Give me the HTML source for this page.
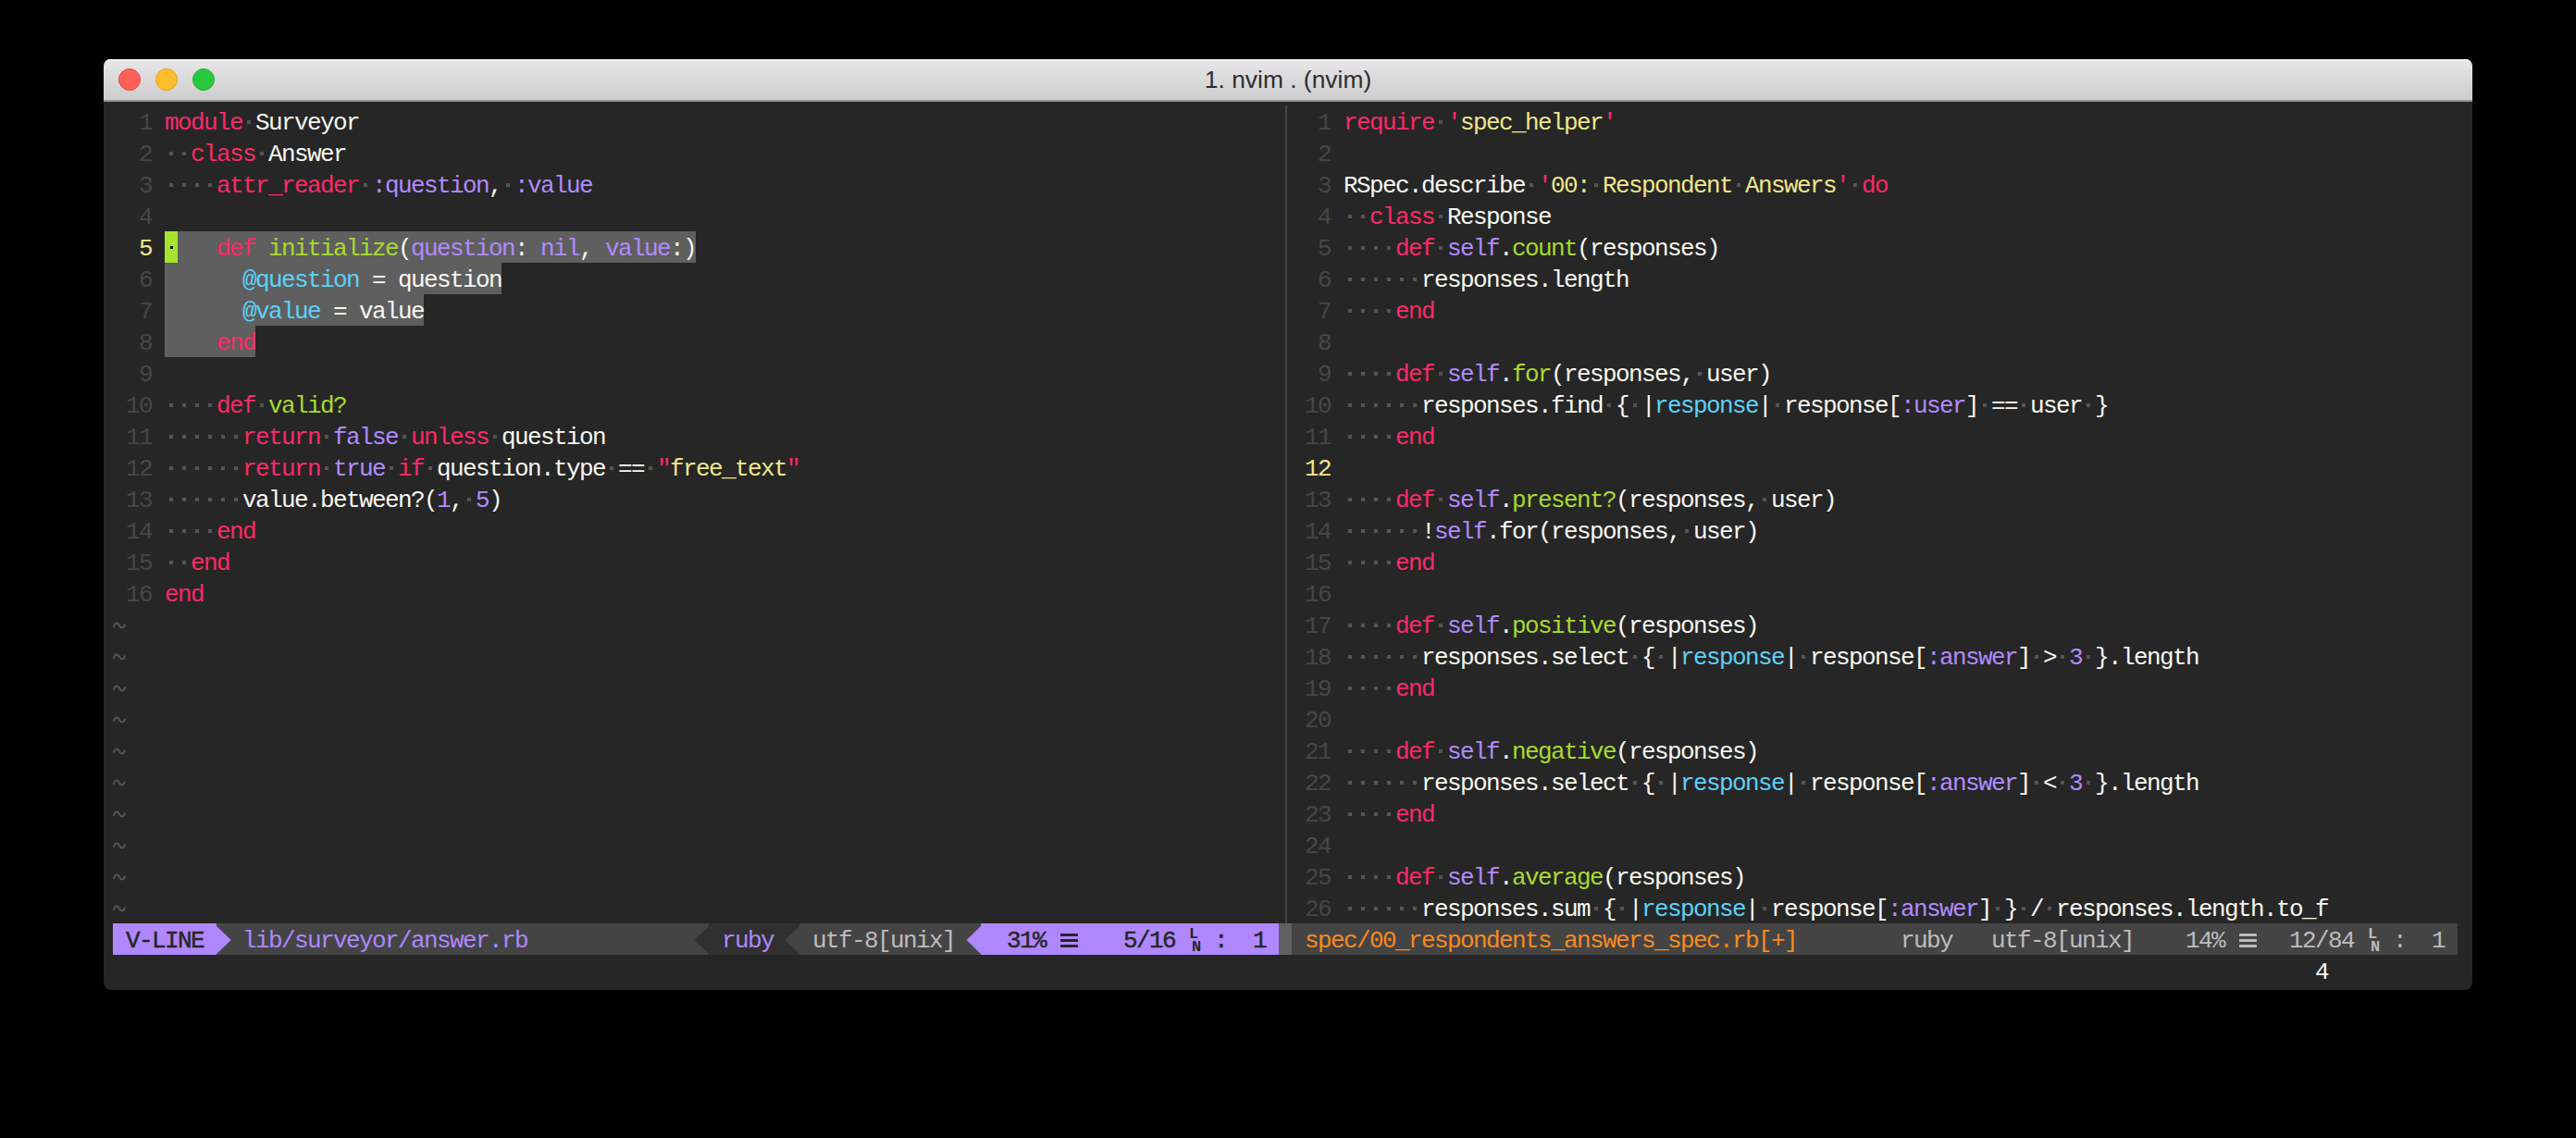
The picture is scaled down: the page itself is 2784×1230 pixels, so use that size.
<!DOCTYPE html>
<html><head><meta charset="utf-8"><style>
html,body{margin:0;padding:0;}
body{width:2784px;height:1230px;background:#000;position:relative;overflow:hidden;}
#win{position:absolute;left:112px;top:64px;width:2560px;height:1006px;background:#262626;border-radius:7px 7px 8px 8px;overflow:hidden;}
#tb{position:absolute;left:0;top:0;width:2560px;height:44px;background:linear-gradient(#e8e6e8,#cecdce);border-bottom:2px solid #959595;box-shadow:inset 0 1.5px 0 #f7f7f7;}
.tl{position:absolute;top:10px;width:22px;height:22px;border-radius:50%;border:1px solid;}
#title{position:absolute;left:0;width:2560px;top:0;height:44px;line-height:44px;text-align:center;font-family:"Liberation Sans",sans-serif;font-size:26.4px;color:#2e2e2e;}
.t{position:absolute;font-family:"Liberation Mono",monospace;font-size:26px;letter-spacing:-1.6023px;line-height:34px;white-space:pre;}
.g{position:absolute;font-family:"Liberation Mono",monospace;font-size:17px;line-height:17px;white-space:pre;}
</style></head><body>
<div id="win">
<div id="tb">
<div class="tl" style="left:16px;background:#FF6159;border-color:#E2463F"></div>
<div class="tl" style="left:56px;background:#FFBD2E;border-color:#E1A116"></div>
<div class="tl" style="left:96px;background:#28C940;border-color:#1DAD2B"></div>
<div id="title">1. nvim . (nvim)</div>
</div>
</div>
<div style="position:absolute;left:178px;top:250px;width:574px;height:34px;background:#5f5f5f;"></div>
<div style="position:absolute;left:178px;top:284px;width:364px;height:34px;background:#5f5f5f;"></div>
<div style="position:absolute;left:178px;top:318px;width:280px;height:34px;background:#5f5f5f;"></div>
<div style="position:absolute;left:178px;top:352px;width:98px;height:34px;background:#5f5f5f;"></div>
<div style="position:absolute;left:178px;top:250px;width:14px;height:34px;background:#A6E22E;"></div>
<div style="position:absolute;left:184px;top:266px;width:3px;height:3px;background:#000000;"></div>
<span class="t" style="left:150px;top:116.0px;color:#464646;">1</span>
<span class="t" style="left:150px;top:150.0px;color:#464646;">2</span>
<span class="t" style="left:150px;top:184.0px;color:#464646;">3</span>
<span class="t" style="left:150px;top:218.0px;color:#464646;">4</span>
<span class="t" style="left:150px;top:252.0px;color:#F0E68C;">5</span>
<span class="t" style="left:150px;top:286.0px;color:#464646;">6</span>
<span class="t" style="left:150px;top:320.0px;color:#464646;">7</span>
<span class="t" style="left:150px;top:354.0px;color:#464646;">8</span>
<span class="t" style="left:150px;top:388.0px;color:#464646;">9</span>
<span class="t" style="left:136px;top:422.0px;color:#464646;">10</span>
<span class="t" style="left:136px;top:456.0px;color:#464646;">11</span>
<span class="t" style="left:136px;top:490.0px;color:#464646;">12</span>
<span class="t" style="left:136px;top:524.0px;color:#464646;">13</span>
<span class="t" style="left:136px;top:558.0px;color:#464646;">14</span>
<span class="t" style="left:136px;top:592.0px;color:#464646;">15</span>
<span class="t" style="left:136px;top:626.0px;color:#464646;">16</span>
<span class="t" style="left:178px;top:116.0px;color:#FC2A68;">module</span>
<div style="position:absolute;left:267px;top:130px;width:4px;height:4px;background:#545454;"></div>
<span class="t" style="left:276px;top:116.0px;color:#F8F8F2;">Surveyor</span>
<div style="position:absolute;left:183px;top:164px;width:4px;height:4px;background:#545454;"></div>
<div style="position:absolute;left:197px;top:164px;width:4px;height:4px;background:#545454;"></div>
<span class="t" style="left:206px;top:150.0px;color:#FC2A68;">class</span>
<div style="position:absolute;left:281px;top:164px;width:4px;height:4px;background:#545454;"></div>
<span class="t" style="left:290px;top:150.0px;color:#F8F8F2;">Answer</span>
<div style="position:absolute;left:183px;top:198px;width:4px;height:4px;background:#545454;"></div>
<div style="position:absolute;left:197px;top:198px;width:4px;height:4px;background:#545454;"></div>
<div style="position:absolute;left:211px;top:198px;width:4px;height:4px;background:#545454;"></div>
<div style="position:absolute;left:225px;top:198px;width:4px;height:4px;background:#545454;"></div>
<span class="t" style="left:234px;top:184.0px;color:#FC2A68;">attr_reader</span>
<div style="position:absolute;left:393px;top:198px;width:4px;height:4px;background:#545454;"></div>
<span class="t" style="left:402px;top:184.0px;color:#B28AFF;">:question</span>
<span class="t" style="left:528px;top:184.0px;color:#F8F8F2;">,</span>
<div style="position:absolute;left:547px;top:198px;width:4px;height:4px;background:#545454;"></div>
<span class="t" style="left:556px;top:184.0px;color:#B28AFF;">:value</span>
<div style="position:absolute;left:183px;top:436px;width:4px;height:4px;background:#545454;"></div>
<div style="position:absolute;left:197px;top:436px;width:4px;height:4px;background:#545454;"></div>
<div style="position:absolute;left:211px;top:436px;width:4px;height:4px;background:#545454;"></div>
<div style="position:absolute;left:225px;top:436px;width:4px;height:4px;background:#545454;"></div>
<span class="t" style="left:234px;top:422.0px;color:#FC2A68;">def</span>
<div style="position:absolute;left:281px;top:436px;width:4px;height:4px;background:#545454;"></div>
<span class="t" style="left:290px;top:422.0px;color:#A8DC2C;">valid?</span>
<div style="position:absolute;left:183px;top:470px;width:4px;height:4px;background:#545454;"></div>
<div style="position:absolute;left:197px;top:470px;width:4px;height:4px;background:#545454;"></div>
<div style="position:absolute;left:211px;top:470px;width:4px;height:4px;background:#545454;"></div>
<div style="position:absolute;left:225px;top:470px;width:4px;height:4px;background:#545454;"></div>
<div style="position:absolute;left:239px;top:470px;width:4px;height:4px;background:#545454;"></div>
<div style="position:absolute;left:253px;top:470px;width:4px;height:4px;background:#545454;"></div>
<span class="t" style="left:262px;top:456.0px;color:#FC2A68;">return</span>
<div style="position:absolute;left:351px;top:470px;width:4px;height:4px;background:#545454;"></div>
<span class="t" style="left:360px;top:456.0px;color:#B28AFF;">false</span>
<div style="position:absolute;left:435px;top:470px;width:4px;height:4px;background:#545454;"></div>
<span class="t" style="left:444px;top:456.0px;color:#FC2A68;">unless</span>
<div style="position:absolute;left:533px;top:470px;width:4px;height:4px;background:#545454;"></div>
<span class="t" style="left:542px;top:456.0px;color:#F8F8F2;">question</span>
<div style="position:absolute;left:183px;top:504px;width:4px;height:4px;background:#545454;"></div>
<div style="position:absolute;left:197px;top:504px;width:4px;height:4px;background:#545454;"></div>
<div style="position:absolute;left:211px;top:504px;width:4px;height:4px;background:#545454;"></div>
<div style="position:absolute;left:225px;top:504px;width:4px;height:4px;background:#545454;"></div>
<div style="position:absolute;left:239px;top:504px;width:4px;height:4px;background:#545454;"></div>
<div style="position:absolute;left:253px;top:504px;width:4px;height:4px;background:#545454;"></div>
<span class="t" style="left:262px;top:490.0px;color:#FC2A68;">return</span>
<div style="position:absolute;left:351px;top:504px;width:4px;height:4px;background:#545454;"></div>
<span class="t" style="left:360px;top:490.0px;color:#B28AFF;">true</span>
<div style="position:absolute;left:421px;top:504px;width:4px;height:4px;background:#545454;"></div>
<span class="t" style="left:430px;top:490.0px;color:#FC2A68;">if</span>
<div style="position:absolute;left:463px;top:504px;width:4px;height:4px;background:#545454;"></div>
<span class="t" style="left:472px;top:490.0px;color:#F8F8F2;">question.type</span>
<div style="position:absolute;left:659px;top:504px;width:4px;height:4px;background:#545454;"></div>
<span class="t" style="left:668px;top:490.0px;color:#F8F8F2;">==</span>
<div style="position:absolute;left:701px;top:504px;width:4px;height:4px;background:#545454;"></div>
<span class="t" style="left:710px;top:490.0px;color:#FC2A68;">&quot;</span>
<span class="t" style="left:724px;top:490.0px;color:#F0E68A;">free_text</span>
<span class="t" style="left:850px;top:490.0px;color:#FC2A68;">&quot;</span>
<div style="position:absolute;left:183px;top:538px;width:4px;height:4px;background:#545454;"></div>
<div style="position:absolute;left:197px;top:538px;width:4px;height:4px;background:#545454;"></div>
<div style="position:absolute;left:211px;top:538px;width:4px;height:4px;background:#545454;"></div>
<div style="position:absolute;left:225px;top:538px;width:4px;height:4px;background:#545454;"></div>
<div style="position:absolute;left:239px;top:538px;width:4px;height:4px;background:#545454;"></div>
<div style="position:absolute;left:253px;top:538px;width:4px;height:4px;background:#545454;"></div>
<span class="t" style="left:262px;top:524.0px;color:#F8F8F2;">value.between?(</span>
<span class="t" style="left:472px;top:524.0px;color:#B28AFF;">1</span>
<span class="t" style="left:486px;top:524.0px;color:#F8F8F2;">,</span>
<div style="position:absolute;left:505px;top:538px;width:4px;height:4px;background:#545454;"></div>
<span class="t" style="left:514px;top:524.0px;color:#B28AFF;">5</span>
<span class="t" style="left:528px;top:524.0px;color:#F8F8F2;">)</span>
<div style="position:absolute;left:183px;top:572px;width:4px;height:4px;background:#545454;"></div>
<div style="position:absolute;left:197px;top:572px;width:4px;height:4px;background:#545454;"></div>
<div style="position:absolute;left:211px;top:572px;width:4px;height:4px;background:#545454;"></div>
<div style="position:absolute;left:225px;top:572px;width:4px;height:4px;background:#545454;"></div>
<span class="t" style="left:234px;top:558.0px;color:#FC2A68;">end</span>
<div style="position:absolute;left:183px;top:606px;width:4px;height:4px;background:#545454;"></div>
<div style="position:absolute;left:197px;top:606px;width:4px;height:4px;background:#545454;"></div>
<span class="t" style="left:206px;top:592.0px;color:#FC2A68;">end</span>
<span class="t" style="left:178px;top:626.0px;color:#FC2A68;">end</span>
<span class="t" style="left:234px;top:252.0px;color:#FC2A68;">def</span>
<span class="t" style="left:290px;top:252.0px;color:#A8DC2C;">initialize</span>
<span class="t" style="left:430px;top:252.0px;color:#F8F8F2;">(</span>
<span class="t" style="left:444px;top:252.0px;color:#B28AFF;">question</span>
<span class="t" style="left:556px;top:252.0px;color:#F8F8F2;">:</span>
<span class="t" style="left:584px;top:252.0px;color:#B28AFF;">nil</span>
<span class="t" style="left:626px;top:252.0px;color:#F8F8F2;">,</span>
<span class="t" style="left:654px;top:252.0px;color:#B28AFF;">value</span>
<span class="t" style="left:724px;top:252.0px;color:#F8F8F2;">:)</span>
<span class="t" style="left:262px;top:286.0px;color:#5CD2F8;">@question</span>
<span class="t" style="left:402px;top:286.0px;color:#F8F8F2;">=</span>
<span class="t" style="left:430px;top:286.0px;color:#F8F8F2;">question</span>
<span class="t" style="left:262px;top:320.0px;color:#5CD2F8;">@value</span>
<span class="t" style="left:360px;top:320.0px;color:#F8F8F2;">=</span>
<span class="t" style="left:388px;top:320.0px;color:#F8F8F2;">value</span>
<span class="t" style="left:234px;top:354.0px;color:#FC2A68;">end</span>
<svg style="position:absolute;left:122px;top:658px" width="14" height="34"><path d="M0.8,20 C1.8,16.5 2.8,15.6 4.2,15.6 C5.6,15.6 6.5,17 7,18 C7.5,19 8.4,20.6 9.8,20.6 C11.2,20.6 12.2,19.6 13.2,16.6" fill="none" stroke="#555555" stroke-width="2"/></svg>
<svg style="position:absolute;left:122px;top:692px" width="14" height="34"><path d="M0.8,20 C1.8,16.5 2.8,15.6 4.2,15.6 C5.6,15.6 6.5,17 7,18 C7.5,19 8.4,20.6 9.8,20.6 C11.2,20.6 12.2,19.6 13.2,16.6" fill="none" stroke="#555555" stroke-width="2"/></svg>
<svg style="position:absolute;left:122px;top:726px" width="14" height="34"><path d="M0.8,20 C1.8,16.5 2.8,15.6 4.2,15.6 C5.6,15.6 6.5,17 7,18 C7.5,19 8.4,20.6 9.8,20.6 C11.2,20.6 12.2,19.6 13.2,16.6" fill="none" stroke="#555555" stroke-width="2"/></svg>
<svg style="position:absolute;left:122px;top:760px" width="14" height="34"><path d="M0.8,20 C1.8,16.5 2.8,15.6 4.2,15.6 C5.6,15.6 6.5,17 7,18 C7.5,19 8.4,20.6 9.8,20.6 C11.2,20.6 12.2,19.6 13.2,16.6" fill="none" stroke="#555555" stroke-width="2"/></svg>
<svg style="position:absolute;left:122px;top:794px" width="14" height="34"><path d="M0.8,20 C1.8,16.5 2.8,15.6 4.2,15.6 C5.6,15.6 6.5,17 7,18 C7.5,19 8.4,20.6 9.8,20.6 C11.2,20.6 12.2,19.6 13.2,16.6" fill="none" stroke="#555555" stroke-width="2"/></svg>
<svg style="position:absolute;left:122px;top:828px" width="14" height="34"><path d="M0.8,20 C1.8,16.5 2.8,15.6 4.2,15.6 C5.6,15.6 6.5,17 7,18 C7.5,19 8.4,20.6 9.8,20.6 C11.2,20.6 12.2,19.6 13.2,16.6" fill="none" stroke="#555555" stroke-width="2"/></svg>
<svg style="position:absolute;left:122px;top:862px" width="14" height="34"><path d="M0.8,20 C1.8,16.5 2.8,15.6 4.2,15.6 C5.6,15.6 6.5,17 7,18 C7.5,19 8.4,20.6 9.8,20.6 C11.2,20.6 12.2,19.6 13.2,16.6" fill="none" stroke="#555555" stroke-width="2"/></svg>
<svg style="position:absolute;left:122px;top:896px" width="14" height="34"><path d="M0.8,20 C1.8,16.5 2.8,15.6 4.2,15.6 C5.6,15.6 6.5,17 7,18 C7.5,19 8.4,20.6 9.8,20.6 C11.2,20.6 12.2,19.6 13.2,16.6" fill="none" stroke="#555555" stroke-width="2"/></svg>
<svg style="position:absolute;left:122px;top:930px" width="14" height="34"><path d="M0.8,20 C1.8,16.5 2.8,15.6 4.2,15.6 C5.6,15.6 6.5,17 7,18 C7.5,19 8.4,20.6 9.8,20.6 C11.2,20.6 12.2,19.6 13.2,16.6" fill="none" stroke="#555555" stroke-width="2"/></svg>
<svg style="position:absolute;left:122px;top:964px" width="14" height="34"><path d="M0.8,20 C1.8,16.5 2.8,15.6 4.2,15.6 C5.6,15.6 6.5,17 7,18 C7.5,19 8.4,20.6 9.8,20.6 C11.2,20.6 12.2,19.6 13.2,16.6" fill="none" stroke="#555555" stroke-width="2"/></svg>
<div style="position:absolute;left:1389px;top:114px;width:2px;height:884px;background:#444444;"></div>
<span class="t" style="left:1424px;top:116.0px;color:#464646;">1</span>
<span class="t" style="left:1452px;top:116.0px;color:#FC2A68;">require</span>
<div style="position:absolute;left:1555px;top:130px;width:4px;height:4px;background:#545454;"></div>
<span class="t" style="left:1564px;top:116.0px;color:#FC2A68;">&#x27;</span>
<span class="t" style="left:1578px;top:116.0px;color:#F0E68A;">spec_helper</span>
<span class="t" style="left:1732px;top:116.0px;color:#FC2A68;">&#x27;</span>
<span class="t" style="left:1424px;top:150.0px;color:#464646;">2</span>
<span class="t" style="left:1424px;top:184.0px;color:#464646;">3</span>
<span class="t" style="left:1452px;top:184.0px;color:#F8F8F2;">RSpec.describe</span>
<div style="position:absolute;left:1653px;top:198px;width:4px;height:4px;background:#545454;"></div>
<span class="t" style="left:1662px;top:184.0px;color:#FC2A68;">&#x27;</span>
<span class="t" style="left:1676px;top:184.0px;color:#F0E68A;">00:</span>
<div style="position:absolute;left:1723px;top:198px;width:4px;height:4px;background:#545454;"></div>
<span class="t" style="left:1732px;top:184.0px;color:#F0E68A;">Respondent</span>
<div style="position:absolute;left:1877px;top:198px;width:4px;height:4px;background:#545454;"></div>
<span class="t" style="left:1886px;top:184.0px;color:#F0E68A;">Answers</span>
<span class="t" style="left:1984px;top:184.0px;color:#FC2A68;">&#x27;</span>
<div style="position:absolute;left:2003px;top:198px;width:4px;height:4px;background:#545454;"></div>
<span class="t" style="left:2012px;top:184.0px;color:#FC2A68;">do</span>
<span class="t" style="left:1424px;top:218.0px;color:#464646;">4</span>
<div style="position:absolute;left:1457px;top:232px;width:4px;height:4px;background:#545454;"></div>
<div style="position:absolute;left:1471px;top:232px;width:4px;height:4px;background:#545454;"></div>
<span class="t" style="left:1480px;top:218.0px;color:#FC2A68;">class</span>
<div style="position:absolute;left:1555px;top:232px;width:4px;height:4px;background:#545454;"></div>
<span class="t" style="left:1564px;top:218.0px;color:#F8F8F2;">Response</span>
<span class="t" style="left:1424px;top:252.0px;color:#464646;">5</span>
<div style="position:absolute;left:1457px;top:266px;width:4px;height:4px;background:#545454;"></div>
<div style="position:absolute;left:1471px;top:266px;width:4px;height:4px;background:#545454;"></div>
<div style="position:absolute;left:1485px;top:266px;width:4px;height:4px;background:#545454;"></div>
<div style="position:absolute;left:1499px;top:266px;width:4px;height:4px;background:#545454;"></div>
<span class="t" style="left:1508px;top:252.0px;color:#FC2A68;">def</span>
<div style="position:absolute;left:1555px;top:266px;width:4px;height:4px;background:#545454;"></div>
<span class="t" style="left:1564px;top:252.0px;color:#B28AFF;">self</span>
<span class="t" style="left:1620px;top:252.0px;color:#F8F8F2;">.</span>
<span class="t" style="left:1634px;top:252.0px;color:#A8DC2C;">count</span>
<span class="t" style="left:1704px;top:252.0px;color:#F8F8F2;">(responses)</span>
<span class="t" style="left:1424px;top:286.0px;color:#464646;">6</span>
<div style="position:absolute;left:1457px;top:300px;width:4px;height:4px;background:#545454;"></div>
<div style="position:absolute;left:1471px;top:300px;width:4px;height:4px;background:#545454;"></div>
<div style="position:absolute;left:1485px;top:300px;width:4px;height:4px;background:#545454;"></div>
<div style="position:absolute;left:1499px;top:300px;width:4px;height:4px;background:#545454;"></div>
<div style="position:absolute;left:1513px;top:300px;width:4px;height:4px;background:#545454;"></div>
<div style="position:absolute;left:1527px;top:300px;width:4px;height:4px;background:#545454;"></div>
<span class="t" style="left:1536px;top:286.0px;color:#F8F8F2;">responses.length</span>
<span class="t" style="left:1424px;top:320.0px;color:#464646;">7</span>
<div style="position:absolute;left:1457px;top:334px;width:4px;height:4px;background:#545454;"></div>
<div style="position:absolute;left:1471px;top:334px;width:4px;height:4px;background:#545454;"></div>
<div style="position:absolute;left:1485px;top:334px;width:4px;height:4px;background:#545454;"></div>
<div style="position:absolute;left:1499px;top:334px;width:4px;height:4px;background:#545454;"></div>
<span class="t" style="left:1508px;top:320.0px;color:#FC2A68;">end</span>
<span class="t" style="left:1424px;top:354.0px;color:#464646;">8</span>
<span class="t" style="left:1424px;top:388.0px;color:#464646;">9</span>
<div style="position:absolute;left:1457px;top:402px;width:4px;height:4px;background:#545454;"></div>
<div style="position:absolute;left:1471px;top:402px;width:4px;height:4px;background:#545454;"></div>
<div style="position:absolute;left:1485px;top:402px;width:4px;height:4px;background:#545454;"></div>
<div style="position:absolute;left:1499px;top:402px;width:4px;height:4px;background:#545454;"></div>
<span class="t" style="left:1508px;top:388.0px;color:#FC2A68;">def</span>
<div style="position:absolute;left:1555px;top:402px;width:4px;height:4px;background:#545454;"></div>
<span class="t" style="left:1564px;top:388.0px;color:#B28AFF;">self</span>
<span class="t" style="left:1620px;top:388.0px;color:#F8F8F2;">.</span>
<span class="t" style="left:1634px;top:388.0px;color:#A8DC2C;">for</span>
<span class="t" style="left:1676px;top:388.0px;color:#F8F8F2;">(responses,</span>
<div style="position:absolute;left:1835px;top:402px;width:4px;height:4px;background:#545454;"></div>
<span class="t" style="left:1844px;top:388.0px;color:#F8F8F2;">user)</span>
<span class="t" style="left:1410px;top:422.0px;color:#464646;">10</span>
<div style="position:absolute;left:1457px;top:436px;width:4px;height:4px;background:#545454;"></div>
<div style="position:absolute;left:1471px;top:436px;width:4px;height:4px;background:#545454;"></div>
<div style="position:absolute;left:1485px;top:436px;width:4px;height:4px;background:#545454;"></div>
<div style="position:absolute;left:1499px;top:436px;width:4px;height:4px;background:#545454;"></div>
<div style="position:absolute;left:1513px;top:436px;width:4px;height:4px;background:#545454;"></div>
<div style="position:absolute;left:1527px;top:436px;width:4px;height:4px;background:#545454;"></div>
<span class="t" style="left:1536px;top:422.0px;color:#F8F8F2;">responses.find</span>
<div style="position:absolute;left:1737px;top:436px;width:4px;height:4px;background:#545454;"></div>
<span class="t" style="left:1746px;top:422.0px;color:#F8F8F2;">{</span>
<div style="position:absolute;left:1765px;top:436px;width:4px;height:4px;background:#545454;"></div>
<span class="t" style="left:1774px;top:422.0px;color:#F8F8F2;">|</span>
<span class="t" style="left:1788px;top:422.0px;color:#5CD2F8;">response</span>
<span class="t" style="left:1900px;top:422.0px;color:#F8F8F2;">|</span>
<div style="position:absolute;left:1919px;top:436px;width:4px;height:4px;background:#545454;"></div>
<span class="t" style="left:1928px;top:422.0px;color:#F8F8F2;">response[</span>
<span class="t" style="left:2054px;top:422.0px;color:#B28AFF;">:user</span>
<span class="t" style="left:2124px;top:422.0px;color:#F8F8F2;">]</span>
<div style="position:absolute;left:2143px;top:436px;width:4px;height:4px;background:#545454;"></div>
<span class="t" style="left:2152px;top:422.0px;color:#F8F8F2;">==</span>
<div style="position:absolute;left:2185px;top:436px;width:4px;height:4px;background:#545454;"></div>
<span class="t" style="left:2194px;top:422.0px;color:#F8F8F2;">user</span>
<div style="position:absolute;left:2255px;top:436px;width:4px;height:4px;background:#545454;"></div>
<span class="t" style="left:2264px;top:422.0px;color:#F8F8F2;">}</span>
<span class="t" style="left:1410px;top:456.0px;color:#464646;">11</span>
<div style="position:absolute;left:1457px;top:470px;width:4px;height:4px;background:#545454;"></div>
<div style="position:absolute;left:1471px;top:470px;width:4px;height:4px;background:#545454;"></div>
<div style="position:absolute;left:1485px;top:470px;width:4px;height:4px;background:#545454;"></div>
<div style="position:absolute;left:1499px;top:470px;width:4px;height:4px;background:#545454;"></div>
<span class="t" style="left:1508px;top:456.0px;color:#FC2A68;">end</span>
<span class="t" style="left:1410px;top:490.0px;color:#F0E68C;">12</span>
<span class="t" style="left:1410px;top:524.0px;color:#464646;">13</span>
<div style="position:absolute;left:1457px;top:538px;width:4px;height:4px;background:#545454;"></div>
<div style="position:absolute;left:1471px;top:538px;width:4px;height:4px;background:#545454;"></div>
<div style="position:absolute;left:1485px;top:538px;width:4px;height:4px;background:#545454;"></div>
<div style="position:absolute;left:1499px;top:538px;width:4px;height:4px;background:#545454;"></div>
<span class="t" style="left:1508px;top:524.0px;color:#FC2A68;">def</span>
<div style="position:absolute;left:1555px;top:538px;width:4px;height:4px;background:#545454;"></div>
<span class="t" style="left:1564px;top:524.0px;color:#B28AFF;">self</span>
<span class="t" style="left:1620px;top:524.0px;color:#F8F8F2;">.</span>
<span class="t" style="left:1634px;top:524.0px;color:#A8DC2C;">present?</span>
<span class="t" style="left:1746px;top:524.0px;color:#F8F8F2;">(responses,</span>
<div style="position:absolute;left:1905px;top:538px;width:4px;height:4px;background:#545454;"></div>
<span class="t" style="left:1914px;top:524.0px;color:#F8F8F2;">user)</span>
<span class="t" style="left:1410px;top:558.0px;color:#464646;">14</span>
<div style="position:absolute;left:1457px;top:572px;width:4px;height:4px;background:#545454;"></div>
<div style="position:absolute;left:1471px;top:572px;width:4px;height:4px;background:#545454;"></div>
<div style="position:absolute;left:1485px;top:572px;width:4px;height:4px;background:#545454;"></div>
<div style="position:absolute;left:1499px;top:572px;width:4px;height:4px;background:#545454;"></div>
<div style="position:absolute;left:1513px;top:572px;width:4px;height:4px;background:#545454;"></div>
<div style="position:absolute;left:1527px;top:572px;width:4px;height:4px;background:#545454;"></div>
<span class="t" style="left:1536px;top:558.0px;color:#F8F8F2;">!</span>
<span class="t" style="left:1550px;top:558.0px;color:#B28AFF;">self</span>
<span class="t" style="left:1606px;top:558.0px;color:#F8F8F2;">.for(responses,</span>
<div style="position:absolute;left:1821px;top:572px;width:4px;height:4px;background:#545454;"></div>
<span class="t" style="left:1830px;top:558.0px;color:#F8F8F2;">user)</span>
<span class="t" style="left:1410px;top:592.0px;color:#464646;">15</span>
<div style="position:absolute;left:1457px;top:606px;width:4px;height:4px;background:#545454;"></div>
<div style="position:absolute;left:1471px;top:606px;width:4px;height:4px;background:#545454;"></div>
<div style="position:absolute;left:1485px;top:606px;width:4px;height:4px;background:#545454;"></div>
<div style="position:absolute;left:1499px;top:606px;width:4px;height:4px;background:#545454;"></div>
<span class="t" style="left:1508px;top:592.0px;color:#FC2A68;">end</span>
<span class="t" style="left:1410px;top:626.0px;color:#464646;">16</span>
<span class="t" style="left:1410px;top:660.0px;color:#464646;">17</span>
<div style="position:absolute;left:1457px;top:674px;width:4px;height:4px;background:#545454;"></div>
<div style="position:absolute;left:1471px;top:674px;width:4px;height:4px;background:#545454;"></div>
<div style="position:absolute;left:1485px;top:674px;width:4px;height:4px;background:#545454;"></div>
<div style="position:absolute;left:1499px;top:674px;width:4px;height:4px;background:#545454;"></div>
<span class="t" style="left:1508px;top:660.0px;color:#FC2A68;">def</span>
<div style="position:absolute;left:1555px;top:674px;width:4px;height:4px;background:#545454;"></div>
<span class="t" style="left:1564px;top:660.0px;color:#B28AFF;">self</span>
<span class="t" style="left:1620px;top:660.0px;color:#F8F8F2;">.</span>
<span class="t" style="left:1634px;top:660.0px;color:#A8DC2C;">positive</span>
<span class="t" style="left:1746px;top:660.0px;color:#F8F8F2;">(responses)</span>
<span class="t" style="left:1410px;top:694.0px;color:#464646;">18</span>
<div style="position:absolute;left:1457px;top:708px;width:4px;height:4px;background:#545454;"></div>
<div style="position:absolute;left:1471px;top:708px;width:4px;height:4px;background:#545454;"></div>
<div style="position:absolute;left:1485px;top:708px;width:4px;height:4px;background:#545454;"></div>
<div style="position:absolute;left:1499px;top:708px;width:4px;height:4px;background:#545454;"></div>
<div style="position:absolute;left:1513px;top:708px;width:4px;height:4px;background:#545454;"></div>
<div style="position:absolute;left:1527px;top:708px;width:4px;height:4px;background:#545454;"></div>
<span class="t" style="left:1536px;top:694.0px;color:#F8F8F2;">responses.select</span>
<div style="position:absolute;left:1765px;top:708px;width:4px;height:4px;background:#545454;"></div>
<span class="t" style="left:1774px;top:694.0px;color:#F8F8F2;">{</span>
<div style="position:absolute;left:1793px;top:708px;width:4px;height:4px;background:#545454;"></div>
<span class="t" style="left:1802px;top:694.0px;color:#F8F8F2;">|</span>
<span class="t" style="left:1816px;top:694.0px;color:#5CD2F8;">response</span>
<span class="t" style="left:1928px;top:694.0px;color:#F8F8F2;">|</span>
<div style="position:absolute;left:1947px;top:708px;width:4px;height:4px;background:#545454;"></div>
<span class="t" style="left:1956px;top:694.0px;color:#F8F8F2;">response[</span>
<span class="t" style="left:2082px;top:694.0px;color:#B28AFF;">:answer</span>
<span class="t" style="left:2180px;top:694.0px;color:#F8F8F2;">]</span>
<div style="position:absolute;left:2199px;top:708px;width:4px;height:4px;background:#545454;"></div>
<span class="t" style="left:2208px;top:694.0px;color:#F8F8F2;">&gt;</span>
<div style="position:absolute;left:2227px;top:708px;width:4px;height:4px;background:#545454;"></div>
<span class="t" style="left:2236px;top:694.0px;color:#B28AFF;">3</span>
<div style="position:absolute;left:2255px;top:708px;width:4px;height:4px;background:#545454;"></div>
<span class="t" style="left:2264px;top:694.0px;color:#F8F8F2;">}.length</span>
<span class="t" style="left:1410px;top:728.0px;color:#464646;">19</span>
<div style="position:absolute;left:1457px;top:742px;width:4px;height:4px;background:#545454;"></div>
<div style="position:absolute;left:1471px;top:742px;width:4px;height:4px;background:#545454;"></div>
<div style="position:absolute;left:1485px;top:742px;width:4px;height:4px;background:#545454;"></div>
<div style="position:absolute;left:1499px;top:742px;width:4px;height:4px;background:#545454;"></div>
<span class="t" style="left:1508px;top:728.0px;color:#FC2A68;">end</span>
<span class="t" style="left:1410px;top:762.0px;color:#464646;">20</span>
<span class="t" style="left:1410px;top:796.0px;color:#464646;">21</span>
<div style="position:absolute;left:1457px;top:810px;width:4px;height:4px;background:#545454;"></div>
<div style="position:absolute;left:1471px;top:810px;width:4px;height:4px;background:#545454;"></div>
<div style="position:absolute;left:1485px;top:810px;width:4px;height:4px;background:#545454;"></div>
<div style="position:absolute;left:1499px;top:810px;width:4px;height:4px;background:#545454;"></div>
<span class="t" style="left:1508px;top:796.0px;color:#FC2A68;">def</span>
<div style="position:absolute;left:1555px;top:810px;width:4px;height:4px;background:#545454;"></div>
<span class="t" style="left:1564px;top:796.0px;color:#B28AFF;">self</span>
<span class="t" style="left:1620px;top:796.0px;color:#F8F8F2;">.</span>
<span class="t" style="left:1634px;top:796.0px;color:#A8DC2C;">negative</span>
<span class="t" style="left:1746px;top:796.0px;color:#F8F8F2;">(responses)</span>
<span class="t" style="left:1410px;top:830.0px;color:#464646;">22</span>
<div style="position:absolute;left:1457px;top:844px;width:4px;height:4px;background:#545454;"></div>
<div style="position:absolute;left:1471px;top:844px;width:4px;height:4px;background:#545454;"></div>
<div style="position:absolute;left:1485px;top:844px;width:4px;height:4px;background:#545454;"></div>
<div style="position:absolute;left:1499px;top:844px;width:4px;height:4px;background:#545454;"></div>
<div style="position:absolute;left:1513px;top:844px;width:4px;height:4px;background:#545454;"></div>
<div style="position:absolute;left:1527px;top:844px;width:4px;height:4px;background:#545454;"></div>
<span class="t" style="left:1536px;top:830.0px;color:#F8F8F2;">responses.select</span>
<div style="position:absolute;left:1765px;top:844px;width:4px;height:4px;background:#545454;"></div>
<span class="t" style="left:1774px;top:830.0px;color:#F8F8F2;">{</span>
<div style="position:absolute;left:1793px;top:844px;width:4px;height:4px;background:#545454;"></div>
<span class="t" style="left:1802px;top:830.0px;color:#F8F8F2;">|</span>
<span class="t" style="left:1816px;top:830.0px;color:#5CD2F8;">response</span>
<span class="t" style="left:1928px;top:830.0px;color:#F8F8F2;">|</span>
<div style="position:absolute;left:1947px;top:844px;width:4px;height:4px;background:#545454;"></div>
<span class="t" style="left:1956px;top:830.0px;color:#F8F8F2;">response[</span>
<span class="t" style="left:2082px;top:830.0px;color:#B28AFF;">:answer</span>
<span class="t" style="left:2180px;top:830.0px;color:#F8F8F2;">]</span>
<div style="position:absolute;left:2199px;top:844px;width:4px;height:4px;background:#545454;"></div>
<span class="t" style="left:2208px;top:830.0px;color:#F8F8F2;">&lt;</span>
<div style="position:absolute;left:2227px;top:844px;width:4px;height:4px;background:#545454;"></div>
<span class="t" style="left:2236px;top:830.0px;color:#B28AFF;">3</span>
<div style="position:absolute;left:2255px;top:844px;width:4px;height:4px;background:#545454;"></div>
<span class="t" style="left:2264px;top:830.0px;color:#F8F8F2;">}.length</span>
<span class="t" style="left:1410px;top:864.0px;color:#464646;">23</span>
<div style="position:absolute;left:1457px;top:878px;width:4px;height:4px;background:#545454;"></div>
<div style="position:absolute;left:1471px;top:878px;width:4px;height:4px;background:#545454;"></div>
<div style="position:absolute;left:1485px;top:878px;width:4px;height:4px;background:#545454;"></div>
<div style="position:absolute;left:1499px;top:878px;width:4px;height:4px;background:#545454;"></div>
<span class="t" style="left:1508px;top:864.0px;color:#FC2A68;">end</span>
<span class="t" style="left:1410px;top:898.0px;color:#464646;">24</span>
<span class="t" style="left:1410px;top:932.0px;color:#464646;">25</span>
<div style="position:absolute;left:1457px;top:946px;width:4px;height:4px;background:#545454;"></div>
<div style="position:absolute;left:1471px;top:946px;width:4px;height:4px;background:#545454;"></div>
<div style="position:absolute;left:1485px;top:946px;width:4px;height:4px;background:#545454;"></div>
<div style="position:absolute;left:1499px;top:946px;width:4px;height:4px;background:#545454;"></div>
<span class="t" style="left:1508px;top:932.0px;color:#FC2A68;">def</span>
<div style="position:absolute;left:1555px;top:946px;width:4px;height:4px;background:#545454;"></div>
<span class="t" style="left:1564px;top:932.0px;color:#B28AFF;">self</span>
<span class="t" style="left:1620px;top:932.0px;color:#F8F8F2;">.</span>
<span class="t" style="left:1634px;top:932.0px;color:#A8DC2C;">average</span>
<span class="t" style="left:1732px;top:932.0px;color:#F8F8F2;">(responses)</span>
<span class="t" style="left:1410px;top:966.0px;color:#464646;">26</span>
<div style="position:absolute;left:1457px;top:980px;width:4px;height:4px;background:#545454;"></div>
<div style="position:absolute;left:1471px;top:980px;width:4px;height:4px;background:#545454;"></div>
<div style="position:absolute;left:1485px;top:980px;width:4px;height:4px;background:#545454;"></div>
<div style="position:absolute;left:1499px;top:980px;width:4px;height:4px;background:#545454;"></div>
<div style="position:absolute;left:1513px;top:980px;width:4px;height:4px;background:#545454;"></div>
<div style="position:absolute;left:1527px;top:980px;width:4px;height:4px;background:#545454;"></div>
<span class="t" style="left:1536px;top:966.0px;color:#F8F8F2;">responses.sum</span>
<div style="position:absolute;left:1723px;top:980px;width:4px;height:4px;background:#545454;"></div>
<span class="t" style="left:1732px;top:966.0px;color:#F8F8F2;">{</span>
<div style="position:absolute;left:1751px;top:980px;width:4px;height:4px;background:#545454;"></div>
<span class="t" style="left:1760px;top:966.0px;color:#F8F8F2;">|</span>
<span class="t" style="left:1774px;top:966.0px;color:#5CD2F8;">response</span>
<span class="t" style="left:1886px;top:966.0px;color:#F8F8F2;">|</span>
<div style="position:absolute;left:1905px;top:980px;width:4px;height:4px;background:#545454;"></div>
<span class="t" style="left:1914px;top:966.0px;color:#F8F8F2;">response[</span>
<span class="t" style="left:2040px;top:966.0px;color:#B28AFF;">:answer</span>
<span class="t" style="left:2138px;top:966.0px;color:#F8F8F2;">]</span>
<div style="position:absolute;left:2157px;top:980px;width:4px;height:4px;background:#545454;"></div>
<span class="t" style="left:2166px;top:966.0px;color:#F8F8F2;">}</span>
<div style="position:absolute;left:2185px;top:980px;width:4px;height:4px;background:#545454;"></div>
<span class="t" style="left:2194px;top:966.0px;color:#F8F8F2;">/</span>
<div style="position:absolute;left:2213px;top:980px;width:4px;height:4px;background:#545454;"></div>
<span class="t" style="left:2222px;top:966.0px;color:#F8F8F2;">responses.length.to_f</span>
<div style="position:absolute;left:122px;top:998px;width:112px;height:34px;background:#AF87FF;"></div>
<span class="t" style="left:136px;top:1000.0px;color:#262626;-webkit-text-stroke:0.45px currentColor;">V-LINE</span>
<div style="position:absolute;left:234px;top:998px;width:14px;height:34px;background:#444444;"></div>
<div style="position:absolute;left:248px;top:998px;width:504px;height:34px;background:#444444;"></div>
<span class="t" style="left:262px;top:1000.0px;color:#AF87FF;">lib/surveyor/answer.rb</span>
<div style="position:absolute;left:752px;top:998px;width:14px;height:34px;background:#444444;"></div>
<div style="position:absolute;left:766px;top:998px;width:84px;height:34px;background:#303030;"></div>
<span class="t" style="left:780px;top:1000.0px;color:#AF87FF;">ruby</span>
<div style="position:absolute;left:850px;top:998px;width:14px;height:34px;background:#303030;"></div>
<div style="position:absolute;left:864px;top:998px;width:182px;height:34px;background:#444444;"></div>
<span class="t" style="left:878px;top:1000.0px;color:#bcbcbc;">utf-8[unix]</span>
<div style="position:absolute;left:1046px;top:998px;width:14px;height:34px;background:#444444;"></div>
<div style="position:absolute;left:1060px;top:998px;width:322px;height:34px;background:#AF87FF;"></div>
<span class="t" style="left:1088px;top:1000.0px;color:#262626;-webkit-text-stroke:0.45px currentColor;">31%</span>
<div style="position:absolute;left:1145.5px;top:1008.5px;width:19px;height:3px;background:#262626;border-radius:0.6px;"></div>
<div style="position:absolute;left:1145.5px;top:1015px;width:19px;height:3px;background:#262626;border-radius:0.6px;"></div>
<div style="position:absolute;left:1145.5px;top:1021px;width:19px;height:3px;background:#262626;border-radius:0.6px;"></div>
<span class="t" style="left:1214px;top:1000.0px;color:#262626;-webkit-text-stroke:0.45px currentColor;">5/16</span>
<span class="g" style="left:1285px;top:1001.1px;color:#262626;font-weight:bold">L</span>
<span class="g" style="left:1288px;top:1014.7px;color:#262626;font-weight:bold">N</span>
<span class="t" style="left:1312px;top:1000.0px;color:#262626;-webkit-text-stroke:0.45px currentColor;">:</span>
<span class="t" style="left:1354px;top:1000.0px;color:#262626;-webkit-text-stroke:0.45px currentColor;">1</span>
<div style="position:absolute;left:1382px;top:998px;width:14px;height:34px;background:#606060;"></div>
<div style="position:absolute;left:1396px;top:998px;width:1260px;height:34px;background:#444444;"></div>
<span class="t" style="left:1410px;top:1000.0px;color:#F98A1F;">spec/00_respondents_answers_spec.rb[+]</span>
<span class="t" style="left:2054px;top:1000.0px;color:#bcbcbc;">ruby</span>
<span class="t" style="left:2152px;top:1000.0px;color:#bcbcbc;">utf-8[unix]</span>
<span class="t" style="left:2362px;top:1000.0px;color:#bcbcbc;">14%</span>
<div style="position:absolute;left:2419.5px;top:1008.5px;width:19px;height:3px;background:#bcbcbc;border-radius:0.6px;"></div>
<div style="position:absolute;left:2419.5px;top:1015px;width:19px;height:3px;background:#bcbcbc;border-radius:0.6px;"></div>
<div style="position:absolute;left:2419.5px;top:1021px;width:19px;height:3px;background:#bcbcbc;border-radius:0.6px;"></div>
<span class="t" style="left:2474px;top:1000.0px;color:#bcbcbc;">12/84</span>
<span class="g" style="left:2559px;top:1001.1px;color:#bcbcbc;font-weight:bold">L</span>
<span class="g" style="left:2562px;top:1014.7px;color:#bcbcbc;font-weight:bold">N</span>
<span class="t" style="left:2586px;top:1000.0px;color:#bcbcbc;">:</span>
<span class="t" style="left:2628px;top:1000.0px;color:#bcbcbc;">1</span>
<span class="t" style="left:2502px;top:1034.0px;color:#F8F8F2;">4</span>
<svg style="position:absolute;left:234px;top:998px;overflow:visible" width="14" height="34"><polygon points="0,3 15.8,18 0,33" fill="#AF87FF"/></svg>
<svg style="position:absolute;left:752px;top:998px;overflow:visible" width="14" height="34"><polygon points="14,3 -1.4,18 14,33" fill="#303030"/></svg>
<svg style="position:absolute;left:850px;top:998px;overflow:visible" width="14" height="34"><polygon points="14,3 -1.4,18 14,33" fill="#444444"/></svg>
<svg style="position:absolute;left:1046px;top:998px;overflow:visible" width="14" height="34"><polygon points="14,3 -1.4,18 14,33" fill="#AF87FF"/></svg>
</body></html>
